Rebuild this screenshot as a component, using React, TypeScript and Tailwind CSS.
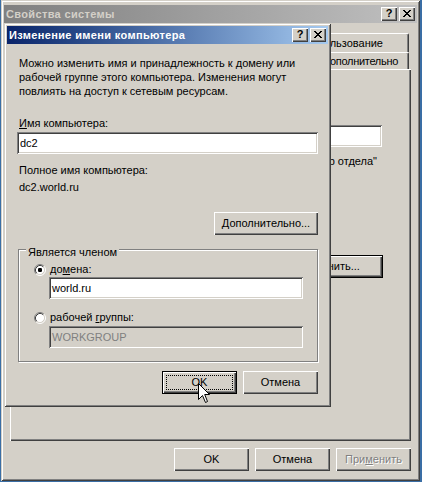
import React from 'react'

const raised = 'shadow-[inset_1px_1px_0_#ffffff,inset_-1px_-1px_0_#404040,inset_-2px_-2px_0_#808080]'
const sunken = 'shadow-[inset_1px_1px_0_#808080,inset_-1px_-1px_0_#ffffff,inset_2px_2px_0_#404040,inset_-2px_-2px_0_#d4d0c8]'
const frame = 'shadow-[inset_1px_1px_0_#d4d0c8,inset_-1px_-1px_0_#404040,inset_2px_2px_0_#ffffff,inset_-2px_-2px_0_#808080]'

function CaptionButtons() {
  return (
    <div className="flex items-center gap-[2px] mr-[2px]">
      <div className={`w-[16px] h-[14px] bg-[#d4d0c8] ${raised} flex items-center justify-center text-[11px] font-bold leading-none text-black pb-[1px]`}>
        ?
      </div>
      <div className={`w-[16px] h-[14px] bg-[#d4d0c8] ${raised} flex items-center justify-center pb-[1px]`}>
        <svg width="8" height="7" viewBox="0 0 8 7" shapeRendering="crispEdges">
          <path d="M0 0H2L4 2.5L6 0H8L5 3.5L8 7H6L4 4.5L2 7H0L3 3.5Z" fill="#000" />
        </svg>
      </div>
    </div>
  )
}

function TitleBar({ title, active }: { title: string; active?: boolean }) {
  return (
    <div
      className={
        'h-[18px] flex items-center justify-between shrink-0 ' +
        (active
          ? 'bg-linear-to-r from-[#0a246a] to-[#a6caf0] text-white'
          : 'bg-linear-to-r from-[#808080] to-[#c0c0c0] text-[#d4d0c8]')
      }
    >
      <span className="pl-[2px] text-[11px] font-bold leading-none tracking-[0.35px] whitespace-nowrap">{title}</span>
      <CaptionButtons />
    </div>
  )
}

function Btn({
  children,
  className = '',
  def,
  focus,
  disabled,
}: {
  children: React.ReactNode
  className?: string
  def?: boolean
  focus?: boolean
  disabled?: boolean
}) {
  return (
    <div
      className={`relative h-[23px] w-[75px] bg-[#d4d0c8] flex items-center justify-center ${raised} ${
        def ? 'border border-black' : ''
      } ${disabled ? 'text-[#808080] [text-shadow:1px_1px_0_#ffffff]' : 'text-black'} ${className}`}
    >
      {focus && <div className="absolute inset-[3px] border border-dotted border-black" />}
      <span className="whitespace-nowrap">{children}</span>
    </div>
  )
}

function Edit({ value, className = '', disabled }: { value: string; className?: string; disabled?: boolean }) {
  return (
    <div
      className={`h-[22px] flex items-center pl-[3px] ${sunken} ${
        disabled ? 'bg-[#d4d0c8] text-[#808080]' : 'bg-white text-black'
      } ${className}`}
    >
      {value}
    </div>
  )
}

function Radio({ checked }: { checked?: boolean }) {
  return (
    <svg width="12" height="12" viewBox="0 0 12 12" className="shrink-0">
      <circle cx="6" cy="6" r="4.5" fill="#fff" />
      <path d="M2.11 9.89A5.5 5.5 0 0 1 9.89 2.11" stroke="#808080" fill="none" />
      <path d="M9.89 2.11A5.5 5.5 0 0 1 2.11 9.89" stroke="#ffffff" fill="none" />
      <path d="M2.82 9.18A4.5 4.5 0 0 1 9.18 2.82" stroke="#404040" fill="none" />
      <path d="M9.18 2.82A4.5 4.5 0 0 1 2.82 9.18" stroke="#d4d0c8" fill="none" />
      {checked && <rect x="4" y="4" width="4" height="4" rx="1.2" fill="#000" />}
    </svg>
  )
}

function Tab({ label, className = '' }: { label?: string; className?: string }) {
  return (
    <div
      className={`bg-[#d4d0c8] border-t border-l border-white border-r border-r-[#404040] rounded-tl-[2px] rounded-tr-[2px] shadow-[inset_-1px_0_0_#808080] flex items-center whitespace-nowrap ${className}`}
    >
      {label}
    </div>
  )
}

function Cursor() {
  return (
    <svg width="13" height="21" viewBox="0 0 13 21" className="absolute left-[198px] top-[383px]">
      <path
        d="M0.5 0.5V16.5L4.5 12.5L7.5 19.5L9.5 18.5L6.7 11.5H11.5Z"
        fill="#fff"
        stroke="#000"
        strokeLinejoin="miter"
      />
    </svg>
  )
}

export default function App() {
  return (
    <div className="w-[422px] h-[482px] bg-[#3a6ea5] relative overflow-hidden font-['Liberation_Sans',Arial,sans-serif] text-[11px] leading-[13px]">
      {/* System properties window */}
      <div className={`ml-[1px] w-[419px] h-[481px] bg-[#d4d0c8] ${frame} pt-[5px] px-[3px] flex flex-col`}>
        <TitleBar title="Свойства системы" />

        <div className="mx-[6px] mt-[10px] flex flex-col">
          {/* tab rows, mostly hidden under the dialog */}
          <div className="h-[19px] flex justify-end pr-[2px]">
            <Tab className="w-[80px]" />
            <Tab className="w-[110px]" />
            <Tab label="Использование" className="pl-[40px] pr-[25px]" />
          </div>
          <div className="h-[17px] flex justify-end pr-[2px]">
            <Tab className="w-[150px]" />
            <Tab label="Дополнительно" className="pl-[40px] pr-[10px] tracking-[-0.3px]" />
          </div>

          <div className={`h-[372px] bg-[#d4d0c8] ${raised} flex flex-col text-black`}>
            <div className="mt-[56px] flex items-center pl-[14px] pr-[29px]">
              <span className="w-[108px]" />
              <Edit value="" className="flex-1 h-[20px]" />
            </div>
            <div className="mt-[8px] self-end mr-[34px] whitespace-nowrap">Например: "Компьютер отдела"</div>
            <Btn def className="mt-[87px] self-end mr-[28px] w-[91px] pr-[14px]">
              Изменить...
            </Btn>
          </div>

          <div className="mt-[7px] flex justify-end gap-[6px]">
            <Btn>OK</Btn>
            <Btn>Отмена</Btn>
            <Btn disabled>
              При<u>м</u>енить
            </Btn>
          </div>
        </div>
      </div>

      {/* Rename computer dialog */}
      <div className={`absolute left-[4px] top-[23px] w-[327px] h-[384px] bg-[#d4d0c8] ${frame} p-[3px] flex flex-col`}>
        <TitleBar title="Изменение имени компьютера" active />

        <div className="flex flex-col px-[10px] text-black">
          <p className="mt-[12px] ml-[2px] leading-[14px] whitespace-nowrap">
            Можно изменить имя и принадлежность к домену или
            <br />
            рабочей группе этого компьютера. Изменения могут
            <br />
            повлиять на доступ к сетевым ресурсам.
          </p>

          <div className="mt-[19px] ml-[2px]">
            <u>И</u>мя компьютера:
          </div>
          <Edit value="dc2" className="mt-[2px]" />

          <div className="mt-[10px] ml-[2px]">Полное имя компьютера:</div>
          <div className="mt-[4px] ml-[2px]">dc2.world.ru</div>

          <Btn className="mt-[18px] self-end w-[104px]">
            <u>Д</u>ополнительно...
          </Btn>

          <div className="relative mt-[14px] ml-[1px] h-[113px] border border-[#808080] shadow-[inset_1px_1px_0_#ffffff,1px_1px_0_#ffffff] flex flex-col pt-[13px] pl-[15px]">
            <span className="absolute -top-[4px] left-[7px] px-[2px] bg-[#d4d0c8]">Является членом</span>
            <div className="h-[13px] flex items-center gap-[4px]">
              <Radio checked />
              <span>
                до<u>м</u>ена:
              </span>
            </div>
            <Edit value="world.ru" className="mt-[1px] ml-[15px] w-[254px]" />
            <div className="mt-[12px] h-[13px] flex items-center gap-[4px]">
              <Radio />
              <span>
                рабочей <u>г</u>руппы:
              </span>
            </div>
            <Edit value="WORKGROUP" disabled className="mt-[2px] ml-[15px] w-[254px]" />
          </div>

          <div className="mt-[9px] flex justify-end gap-[6px]">
            <Btn def focus>
              OK
            </Btn>
            <Btn>Отмена</Btn>
          </div>
        </div>
      </div>

      <Cursor />
    </div>
  )
}
